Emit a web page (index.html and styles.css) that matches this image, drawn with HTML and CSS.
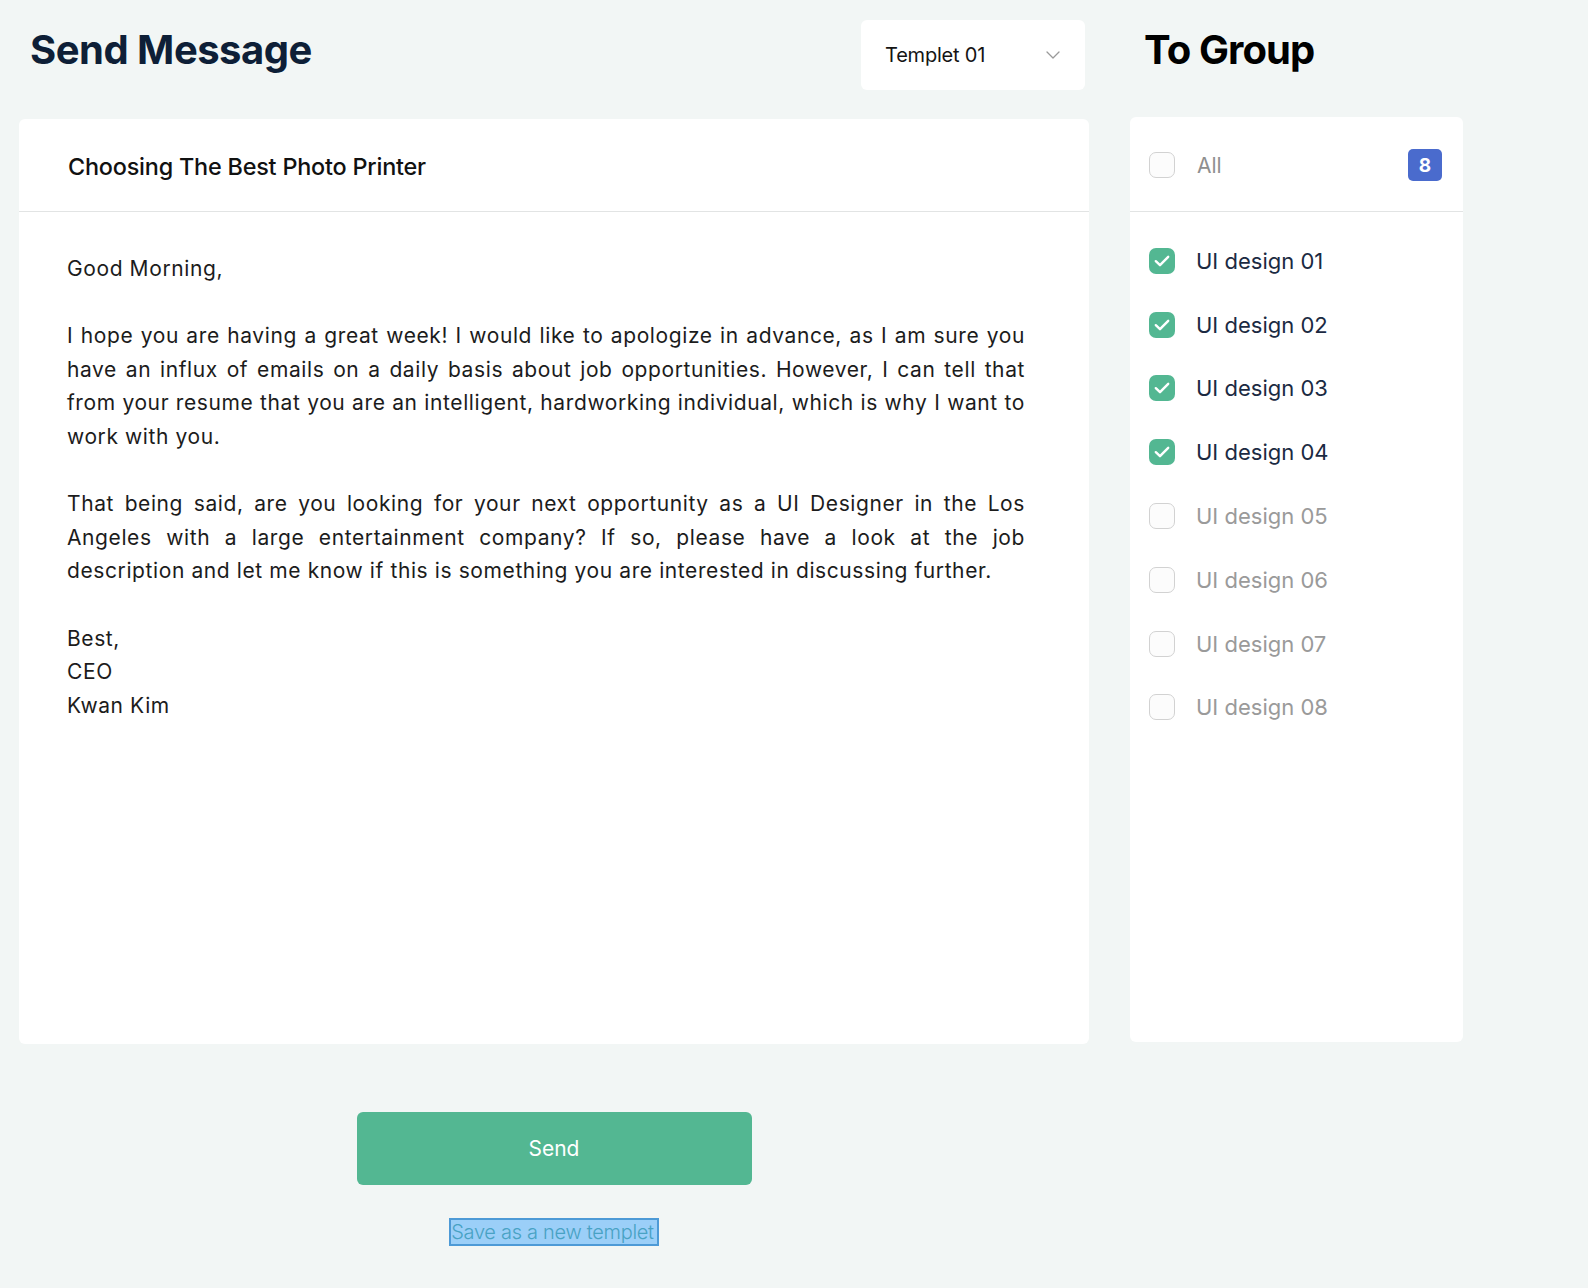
FILE: index.html
```html
<!DOCTYPE html>
<html lang="en">
<head>
<meta charset="utf-8">
<title>Send Message</title>
<link rel="stylesheet" href="styles.css">
</head>
<body>
<div class="page">
  <div class="left-head">
    <h1 class="title">Send Message</h1>
    <div class="select">
      <span>Templet 01</span>
      <svg class="chev" width="14" height="8" viewBox="0 0 14 8"><path d="M1 1l6 6 6-6" fill="none" stroke="#9a9a9a" stroke-width="1.3" stroke-linecap="round" stroke-linejoin="round"/></svg>
    </div>
  </div>
  <div class="right-head">
    <h2 class="title2">To Group</h2>
  </div>

  <div class="mail-card">
    <div class="mail-subject">Choosing The Best Photo Printer</div>
    <div class="mail-body">
      <p>Good Morning,</p>
      <p>I hope you are having a great week! I would like to apologize in advance, as I am sure you have an influx of emails on a daily basis about job opportunities. However, I can tell that from your resume that you are an intelligent, hardworking individual, which is why I want to work with you.</p>
      <p>That being said, are you looking for your next opportunity as a UI Designer in the Los Angeles with a large entertainment company? If so, please have a look at the job description and let me know if this is something you are interested in discussing further.</p>
      <p>Best,<br>CEO<br>Kwan Kim</p>
    </div>
  </div>

  <div class="group-card">
    <div class="group-head">
      <span class="box"></span>
      <span class="all">All</span>
      <span class="badge">8</span>
    </div>
    <ul class="group-list">
      <li class="item on"><span class="box checked"><svg width="16" height="12" viewBox="0 0 16 12"><path d="M1.8 6.2l4.2 4L14.2 1.8" fill="none" stroke="#fff" stroke-width="2.4" stroke-linecap="round" stroke-linejoin="round"/></svg></span><span>UI design 01</span></li>
      <li class="item on"><span class="box checked"><svg width="16" height="12" viewBox="0 0 16 12"><path d="M1.8 6.2l4.2 4L14.2 1.8" fill="none" stroke="#fff" stroke-width="2.4" stroke-linecap="round" stroke-linejoin="round"/></svg></span><span>UI design 02</span></li>
      <li class="item on"><span class="box checked"><svg width="16" height="12" viewBox="0 0 16 12"><path d="M1.8 6.2l4.2 4L14.2 1.8" fill="none" stroke="#fff" stroke-width="2.4" stroke-linecap="round" stroke-linejoin="round"/></svg></span><span>UI design 03</span></li>
      <li class="item on"><span class="box checked"><svg width="16" height="12" viewBox="0 0 16 12"><path d="M1.8 6.2l4.2 4L14.2 1.8" fill="none" stroke="#fff" stroke-width="2.4" stroke-linecap="round" stroke-linejoin="round"/></svg></span><span>UI design 04</span></li>
      <li class="item"><span class="box"></span><span>UI design 05</span></li>
      <li class="item"><span class="box"></span><span>UI design 06</span></li>
      <li class="item"><span class="box"></span><span>UI design 07</span></li>
      <li class="item"><span class="box"></span><span>UI design 08</span></li>
    </ul>
  </div>

  <div class="actions">
    <button class="send">Send</button>
    <span class="save">Save as a new templet</span>
  </div>
</div>
</body>
</html>
```

FILE: styles.css
```css
* { box-sizing: border-box; }
html, body { margin: 0; padding: 0; }
body {
  background: #f2f6f5;
  font-family: Inter, "Noto Sans", "Liberation Sans", sans-serif;
  width: 1588px;
  height: 1288px;
  overflow: hidden;
}
.page {
  display: grid;
  grid-template-columns: 1070px 333px;
  grid-template-rows: 70px auto auto;
  column-gap: 41px;
  row-gap: 29px;
  padding: 20px 0 0 19px;
}
.left-head {
  display: flex;
  align-items: center;
  justify-content: space-between;
  padding: 0 4px 0 11px;
}
.title {
  margin: 0;
  font-size: 40px;
  font-weight: 700;
  color: #0e1f37;
  letter-spacing: -0.5px;
  line-height: 1;
  position: relative;
  top: -5px;
}
.select {
  width: 224px;
  height: 70px;
  background: #fff;
  border-radius: 6px;
  display: flex;
  align-items: center;
  justify-content: space-between;
  padding: 0 25px 0 24px;
  font-size: 20px;
  color: #141414;
  letter-spacing: -0.2px;
}
.right-head {
  display: flex;
  align-items: center;
  padding-left: 14px;
}
.title2 {
  margin: 0;
  font-size: 40px;
  font-weight: 700;
  color: #000;
  letter-spacing: -0.9px;
  line-height: 1;
  position: relative;
  top: -5px;
}
.mail-card {
  background: #fff;
  border-radius: 6px;
  height: 925px;
}
.mail-subject {
  height: 93px;
  border-bottom: 1px solid #e2e4e4;
  display: flex;
  align-items: center;
  padding: 3px 0 0 49px;
  font-size: 23.4px;
  font-weight: 500;
  color: #111;
  letter-spacing: -0.2px;
}
.mail-body {
  padding: 40px 64px 0 48px;
  font-size: 21px;
  line-height: 33.6px;
  letter-spacing: 0.6px;
  color: #1c1c1c;
  text-align: justify;
}
.mail-body p { margin: 0 0 33.6px; }
.group-card {
  background: #fff;
  border-radius: 6px;
  height: 925px;
  margin-top: -2px;
}
.group-head {
  height: 95px;
  border-bottom: 1px solid #e2e4e4;
  display: flex;
  align-items: center;
  padding: 2px 21px 0 19px;
}
.box {
  width: 26px;
  height: 26px;
  border-radius: 7px;
  border: 1.5px solid #d2d2d2;
  background: #fcfcfc;
  display: flex;
  align-items: center;
  justify-content: center;
  flex: none;
}
.box.checked {
  border: none;
  background: #53b792;
}
.all {
  margin-left: 22px;
  font-size: 21px;
  color: #8f8f8f;
  flex: 1;
}
.badge {
  width: 34px;
  height: 32px;
  border-radius: 5px;
  background: #4a6bcd;
  color: #fff;
  font-weight: 700;
  font-size: 19px;
  display: flex;
  align-items: center;
  justify-content: center;
}
.group-list {
  list-style: none;
  margin: 0;
  padding: 17px 0 0 19px;
}
.item {
  height: 63.8px;
  display: flex;
  align-items: center;
  gap: 21px;
  font-size: 22px;
  color: #9a9a9a;
}
.item.on { color: #1b2a42; }
.actions {
  grid-column: 1;
  display: flex;
  flex-direction: column;
  align-items: center;
  padding-top: 39px;
}
.send {
  width: 395px;
  height: 73px;
  border: none;
  border-radius: 6px;
  background: #53b792;
  color: #fff;
  font-family: inherit;
  font-size: 21px;
  font-weight: 400;
}
.save {
  margin-top: 33px;
  display: inline-block;
  padding: 0 3px 0 0;
  height: 28px;
  line-height: 24px;
  font-size: 20px;
  font-weight: 300;
  color: #48a2c4;
  background: #9bcff8;
  border: 2px solid #4d9ad6;
  letter-spacing: -0.3px;
}
```
